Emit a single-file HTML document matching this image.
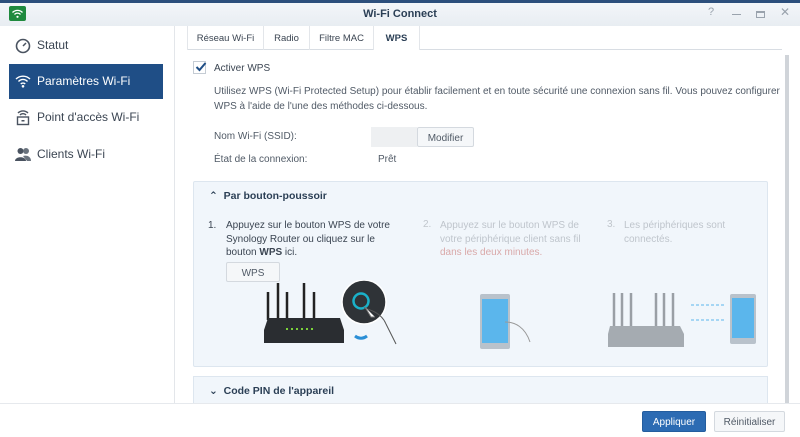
<!DOCTYPE html>
<html><head><style>
*{box-sizing:border-box;margin:0;padding:0}
body{width:800px;height:437px;overflow:hidden;background:#fff;font-family:"Liberation Sans","DejaVu Sans",sans-serif;font-size:10px;color:#333;position:relative}
.abs{position:absolute}
.top{left:0;top:0;width:800px;height:3px;background:#2c4f7c}
.title{left:0;top:3px;width:800px;height:23px;background:linear-gradient(#f3f6f9,#e8edf2);}
.title .t{position:absolute;left:0;width:800px;top:5px;text-align:center;font-weight:bold;font-size:11px;color:#2b3f55}
.side{left:0;top:26px;width:175px;height:411px;background:#fff;border-right:1px solid #e3e6ea}
.item{position:absolute;left:9px;width:154px;height:35px;font-size:12px;color:#3b4552;padding-left:28px;line-height:35px}
.sel{background:#1f4e86;color:#fff}
.tabs{left:187px;top:26px;height:24px;width:595px;border-bottom:1px solid #d8dde3}
.tab{position:absolute;top:0;height:24px;display:flex;align-items:center;justify-content:center;font-size:9.5px;color:#3b4552;border-right:1px solid #e3e6ea;padding-top:1px}
.txt{font-size:10px;color:#505a66}
.btn{position:absolute;border:1px solid #d4d9df;background:#f5f7f9;border-radius:2px;display:flex;align-items:center;justify-content:center;font-size:10px;color:#505a66;padding-top:2px}
.panel{left:193px;top:181px;width:575px;height:186px;background:#f1f6fb;border:1px solid #dde6ef;border-radius:2px}
.panel2{left:193px;top:376px;width:575px;height:30px;background:#f1f6fb;border:1px solid #dde6ef}
.h{font-weight:bold;color:#2b3f55;font-size:10.5px}
.foot{left:0;top:403px;width:800px;height:34px;background:#fff;border-top:1px solid #e6e9ed}
</style></head><body>
<div class="abs top"></div>
<div class="abs title"><div class="t">Wi-Fi Connect</div>
<div class="abs" style="left:9px;top:3px;width:17px;height:15px;background:#1f8a3e;border-radius:2px"></div>
<svg class="abs" style="left:11px;top:5px" width="13" height="11" viewBox="0 0 13 11"><path d="M1.5 4.5a7 7 0 0 1 10 0M3.5 6.5a4 4 0 0 1 6 0" stroke="#fff" stroke-width="1.3" fill="none"/><circle cx="6.5" cy="8.8" r="1.1" fill="#fff"/></svg>
<div class="abs" style="left:708px;top:3px;color:#9aa3ad;font-size:11px">?</div>
<div class="abs" style="left:732px;top:11px;width:9px;height:1px;background:#9aa3ad"></div>
<div class="abs" style="left:756px;top:8px;width:9px;height:7px;border:1px solid #9aa3ad;border-top-width:2px"></div>
<div class="abs" style="left:780px;top:2px;color:#9aa3ad;font-size:12px">✕</div>
</div>
<div class="abs side">
<div class="item" style="top:2px">Statut</div>
<svg class="abs" style="left:15px;top:12px" width="16" height="16"><circle cx="8" cy="8" r="6.5" stroke="#4a5360" stroke-width="1.6" fill="none"/><path d="M8 8l3-3" stroke="#4a5360" stroke-width="1.5"/></svg>
<div class="item sel" style="top:38px">Paramètres Wi-Fi</div>
<svg class="abs" style="left:15px;top:48px" width="16" height="14"><path d="M1 5a10 10 0 0 1 14 0M3.5 7.5a6 6 0 0 1 9 0M5.8 10a3 3 0 0 1 4.4 0" stroke="#fff" stroke-width="1.4" fill="none"/><circle cx="8" cy="12.3" r="1.3" fill="#fff"/></svg>
<div class="item" style="top:74px">Point d'accès Wi-Fi</div>
<svg class="abs" style="left:16px;top:83px" width="14" height="17"><path d="M2 4a7 7 0 0 1 10 0M4 6a4 4 0 0 1 6 0" stroke="#4a5360" stroke-width="1.4" fill="none"/><rect x="1.5" y="8" width="11" height="7.5" stroke="#4a5360" stroke-width="1.4" fill="none"/><rect x="5.5" y="11" width="3" height="1.5" fill="#4a5360"/></svg>
<div class="item" style="top:111px">Clients Wi-Fi</div>
<svg class="abs" style="left:15px;top:121px" width="17" height="15"><circle cx="5.5" cy="4" r="3" fill="#4a5360"/><path d="M0 14c0-5 11-5 11 0z" fill="#4a5360"/><circle cx="11" cy="4" r="3" fill="#6a737e"/><path d="M8 9c3-1 8 0 8 5h-4z" fill="#6a737e"/></svg>
</div>
<div class="abs tabs">
<div class="tab" style="left:0;width:77px;border-left:1px solid #e3e6ea">Réseau Wi-Fi</div>
<div class="tab" style="left:77px;width:46px">Radio</div>
<div class="tab" style="left:123px;width:64px">Filtre MAC</div>
<div class="tab" style="left:187px;width:46px;font-weight:bold;color:#2b3f55;background:#fff">WPS</div>
</div>
<div class="abs" style="left:785px;top:55px;width:4px;height:348px;background:#d0d4d9"></div>
<div class="abs" style="left:193px;top:61px;width:13px;height:13px;border:1px solid #c5ccd4;background:#fff"></div>
<svg class="abs" style="left:194px;top:60px" width="14" height="14"><path d="M2.5 7l3 3 6-7" stroke="#1f4e86" stroke-width="2" fill="none"/></svg>
<div class="abs txt" style="left:214px;top:63px;color:#3b4552">Activer WPS</div>
<div class="abs txt" style="left:214px;top:84px;line-height:15px;width:570px">Utilisez WPS (Wi-Fi Protected Setup) pour établir facilement et en toute sécurité une connexion sans fil. Vous pouvez configurer WPS à l'aide de l'une des méthodes ci-dessous.</div>
<div class="abs txt" style="left:214px;top:131px">Nom Wi-Fi (SSID):</div>
<div class="abs" style="left:371px;top:127px;width:46px;height:20px;background:#eef0f2"></div>
<div class="btn" style="left:417px;top:127px;width:57px;height:20px">Modifier</div>
<div class="abs txt" style="left:214px;top:154px">État de la connexion:</div>
<div class="abs txt" style="left:378px;top:154px">Prêt</div>
<div class="abs panel"></div>
<div class="abs h" style="left:209px;top:190px">⌃&nbsp; Par bouton-poussoir</div>
<div class="abs txt" style="left:208px;top:219px;line-height:13.5px;color:#3b4552">1.</div>
<div class="abs txt" style="left:226px;top:219px;line-height:13.5px;width:180px;color:#3b4552">Appuyez sur le bouton WPS de votre Synology Router ou cliquez sur le bouton <b>WPS</b> ici.</div>
<div class="abs txt" style="left:423px;top:219px;color:#c0c6cc">2.</div>
<div class="abs txt" style="left:440px;top:219px;line-height:13.5px;width:158px;color:#bfc5cc">Appuyez sur le bouton WPS de votre périphérique client sans fil <span style="color:#d9a8a8">dans les deux minutes.</span></div>
<div class="abs txt" style="left:607px;top:219px;color:#c0c6cc">3.</div>
<div class="abs txt" style="left:624px;top:219px;line-height:13.5px;width:110px;color:#bfc5cc">Les périphériques sont connectés.</div>
<div class="btn" style="left:226px;top:262px;width:54px;height:20px">WPS</div>
<svg class="abs" style="left:262px;top:280px" width="150" height="70">
<g stroke="#222" stroke-width="2.5"><path d="M6 40V12M16 40V3M25 40V12M42 40V3M52 40V12"/></g>
<path d="M6 38h72l4 12v13H2V50z" fill="#2a2d31"/>
<g fill="#7bd23a"><rect x="24" y="48" width="2" height="2"/><rect x="29" y="48" width="2" height="2"/><rect x="34" y="48" width="2" height="2"/><rect x="39" y="48" width="2" height="2"/><rect x="44" y="48" width="2" height="2"/><rect x="49" y="48" width="2" height="2"/></g>
<circle cx="102" cy="22" r="22" fill="#2f3337" stroke="#fff" stroke-width="1.5"/>
<circle cx="99" cy="21" r="7.5" fill="none" stroke="#1ab1c9" stroke-width="2.5"/>
<path d="M102 28c8 2 18 6 22 16l10 20" stroke="#555" fill="none"/>
<path d="M103 27l6 10 4 0" stroke="#777" fill="#fff"/>
<path d="M105 56c-4 3-8 3-12 0" stroke="#2b8fd6" stroke-width="3" fill="none"/>
</svg>
<svg class="abs" style="left:470px;top:292px" width="90" height="60"><rect x="10" y="2" width="30" height="55" rx="2" fill="#b9c2cb"/><rect x="12" y="7" width="26" height="44" fill="#5bb6ec"/><path d="M35 30c10 0 20 5 25 20" stroke="#999" fill="none"/></svg>
<svg class="abs" style="left:606px;top:288px" width="160" height="62">
<g stroke="#9a9fa5" stroke-width="2.5"><path d="M8 45V5M16 40V5M25 40V5M50 40V5M58 40V5M67 45V5"/></g>
<path d="M4 38h70l4 8v13H2V46z" fill="#a5abb1"/>
<path d="M85 17h35M85 32h35" stroke="#5bb6ec" stroke-dasharray="3 2"/>
<rect x="124" y="6" width="26" height="50" rx="2" fill="#b9c2cb"/><rect x="126" y="10" width="22" height="40" fill="#5bb6ec"/>
</svg>
<div class="abs panel2"></div>
<div class="abs h" style="left:209px;top:385px">⌄&nbsp; Code PIN de l'appareil</div>
<div class="abs foot"></div>
<div class="abs" style="left:642px;top:411px;width:64px;height:21px;background:#2c6bb3;border:1px solid #245d9e;border-radius:2px;color:#fff;font-size:10px;display:flex;align-items:center;justify-content:center;padding-top:2px">Appliquer</div>
<div class="btn" style="left:714px;top:411px;width:71px;height:21px">Réinitialiser</div>
</body></html>
